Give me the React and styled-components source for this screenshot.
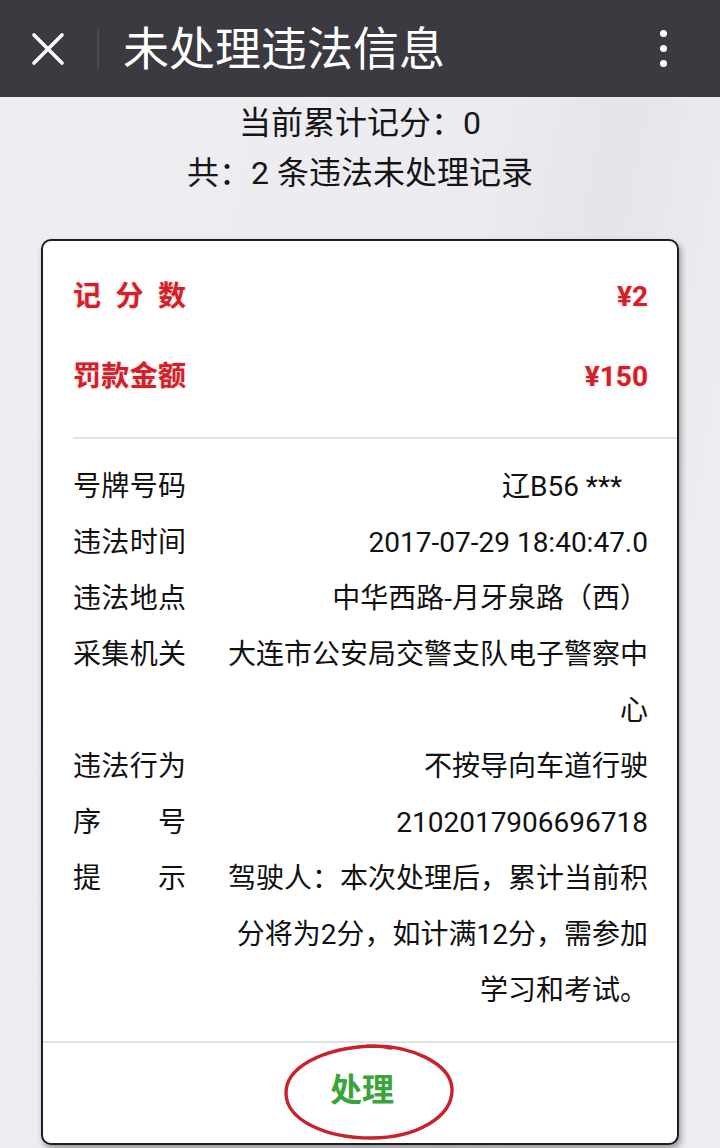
import React from "react";
import styled, { createGlobalStyle } from "styled-components";

const GlobalStyle = createGlobalStyle`
  html, body {
    margin: 0;
    padding: 0;
  }
  body {
    background: #ececf1;
    font-family: Roboto, "Noto Sans CJK SC", sans-serif;
    color: #111;
  }
`;

const Page = styled.div`
  width: 720px;
  min-height: 1148px;
  background: linear-gradient(100deg, #ededf2 0%, #ebebf0 55%, #e4e4e9 70%, #ececf1 85%);
`;

const TopBar = styled.div`
  height: 97px;
  background: #3b3a40;
  display: flex;
  align-items: center;
  padding: 0 0 0 30px;
`;

const IconButton = styled.div`
  width: 36px;
  height: 36px;
  display: flex;
  align-items: center;
  justify-content: center;
`;

const BarDivider = styled.div`
  width: 2px;
  height: 40px;
  background: #4c4b52;
  margin: 0 24px 0 31px;
`;

const Title = styled.h1`
  flex: 1;
  margin: 0;
  color: #fff;
  font-size: 46px;
  font-weight: 400;
  line-height: 1;
`;

const MoreButton = styled.div`
  width: 30px;
  margin-right: 42px;
  display: flex;
  flex-direction: column;
  align-items: center;
  gap: 8px;
`;

const Dot = styled.span`
  width: 7px;
  height: 7px;
  border-radius: 50%;
  background: #fff;
`;

const Summary = styled.div`
  text-align: center;
  font-size: 32px;
  line-height: 50px;
  color: #151515;
  padding-top: 1px;
`;

const Card = styled.div`
  margin: 41px 41px 0;
  background: #fff;
  border: 2px solid #1d1d1f;
  border-radius: 10px;
  box-shadow: 2px 4px 6px rgba(0, 0, 0, 0.35);
  overflow: hidden;
`;

const FeeSection = styled.div`
  margin-left: 30px;
  padding: 16px 29px 20px 0;
  border-bottom: 2px solid #e3e3e6;
`;

const FeeRow = styled.div`
  height: 80px;
  display: flex;
  align-items: center;
  justify-content: space-between;
  color: #d21f28;
  font-weight: 700;
  font-size: 28px;
  line-height: 56px;
  text-shadow: 0 0 3px rgba(210, 31, 40, 0.25);
`;

const DetailSection = styled.div`
  padding: 20px 29px 22px 30px;
  border-bottom: 2px solid #e3e3e6;
`;

const DetailRow = styled.div`
  display: flex;
  gap: 31px;
  font-size: 28px;
  line-height: 56px;
`;

const Label = styled.div`
  width: 113px;
  flex-shrink: 0;
  height: 56px;
  display: flex;
  justify-content: space-between;
`;

const Value = styled.div`
  flex: 1;
  min-width: 0;
  text-align: right;
  padding-right: ${(p) => p.$inset || 0}px;
`;

const ActionArea = styled.div`
  position: relative;
  height: 100px;
  display: flex;
  align-items: center;
  justify-content: center;
`;

const ActionButton = styled.button`
  border: none;
  background: none;
  padding: 0;
  margin: -12px 0 0 4px;
  color: #37a537;
  font-family: Roboto, "Noto Sans CJK SC", sans-serif;
  font-size: 32px;
  font-weight: 700;
  cursor: pointer;
`;

const Circle = styled.svg`
  position: absolute;
  left: calc(50% - 79px);
  top: -1px;
  pointer-events: none;
`;

const JustifiedLabel = ({ text }) => (
  <Label>
    {text.split("").map((c, i) => (
      <span key={i}>{c}</span>
    ))}
  </Label>
);

const details = [
  { label: "号牌号码", value: "辽B56 ***", inset: 26 },
  { label: "违法时间", value: "2017-07-29 18:40:47.0" },
  { label: "违法地点", value: "中华西路-月牙泉路（西）" },
  { label: "采集机关", value: "大连市公安局交警支队电子警察中心" },
  { label: "违法行为", value: "不按导向车道行驶" },
  { label: "序号", value: "2102017906696718" },
  { label: "提示", value: "驾驶人：本次处理后，累计当前积分将为2分，如计满12分，需参加学习和考试。" },
];

const App = () => {
  return (
    <Page>
      <GlobalStyle />
      <TopBar>
        <IconButton>
          <svg width="34" height="34" viewBox="0 0 34 34">
            <path d="M3 3 L31 31 M31 3 L3 31" stroke="#fff" strokeWidth="3.6" strokeLinecap="round" />
          </svg>
        </IconButton>
        <BarDivider />
        <Title>未处理违法信息</Title>
        <MoreButton>
          <Dot />
          <Dot />
          <Dot />
        </MoreButton>
      </TopBar>

      <Summary>
        <div>当前累计记分：0</div>
        <div>共：2 条违法未处理记录</div>
      </Summary>

      <Card>
        <FeeSection>
          <FeeRow>
            <JustifiedLabel text="记分数" />
            <span>¥2</span>
          </FeeRow>
          <FeeRow>
            <JustifiedLabel text="罚款金额" />
            <span>¥150</span>
          </FeeRow>
        </FeeSection>

        <DetailSection>
          {details.map((d) => (
            <DetailRow key={d.label}>
              <JustifiedLabel text={d.label} />
              <Value $inset={d.inset}>{d.value}</Value>
            </DetailRow>
          ))}
        </DetailSection>

        <ActionArea>
          <ActionButton>处理</ActionButton>
          <Circle width="178" height="100" viewBox="0 0 178 100">
            <path
              d="M86 4 C130 2 170 22 171 47 C172 75 135 96 90 96 C44 96 6 78 5 52 C4 26 40 6 92 4 C100 4 106 5 110 6"
              fill="none"
              stroke="#c8222c"
              strokeWidth="3.4"
              strokeLinecap="round"
            />
          </Circle>
        </ActionArea>
      </Card>
    </Page>
  );
};

export default App;
